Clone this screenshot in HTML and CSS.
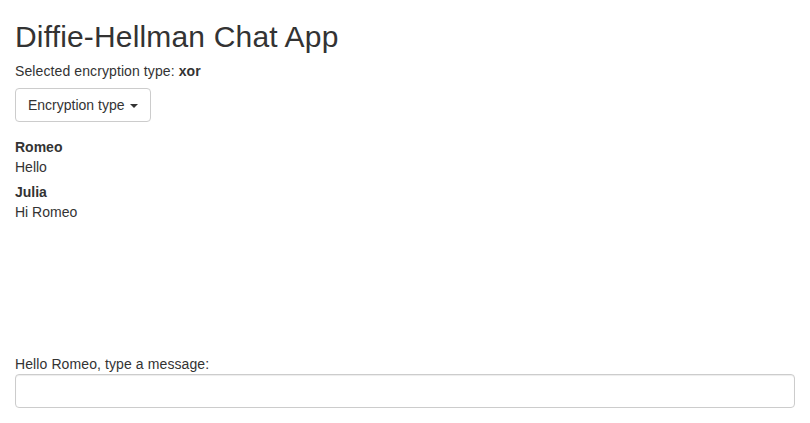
FILE: index.html
```html
<!DOCTYPE html>
<html>
<head>
<meta charset="utf-8">
<link rel="stylesheet" href="styles.css">
</head>
<body>
<div class="container">
  <h2 class="title">Diffie-Hellman Chat App</h2>
  <div class="selected">Selected encryption type: <b>xor</b></div>
  <div class="dropdown">
    <button class="btn" type="button">Encryption type <span class="caret"></span></button>
  </div>
  <div class="messages">
    <div class="message">
      <div class="author">Romeo</div>
      <div class="text">Hello</div>
    </div>
    <div class="message">
      <div class="author">Julia</div>
      <div class="text">Hi Romeo</div>
    </div>
  </div>
  <div class="compose">
    <label class="compose-label">Hello Romeo, type a message:</label>
    <input class="form-control" type="text">
  </div>
</div>
</body>
</html>
```
FILE: styles.css
```css
html, body {
  margin: 0;
  padding: 0;
  background: #fff;
}
body {
  font-family: "Liberation Sans", Arial, sans-serif;
  font-size: 14px;
  line-height: 20px;
  color: #333;
}
.container {
  padding: 0 15px;
  display: flex;
  flex-direction: column;
}
.title {
  font-size: 30px;
  font-weight: 500;
  line-height: 33px;
  letter-spacing: 0.17px;
  margin: 20px 0 8px;
}
.selected {
  margin: 0;
  letter-spacing: 0.1px;
}
.dropdown {
  margin-top: 7px;
  display: flex;
}
.btn {
  font-family: inherit;
  font-size: 14px;
  line-height: 20px;
  color: #333;
  background: #fff;
  border: 1px solid #ccc;
  border-radius: 4px;
  padding: 6px 12px;
  height: 34px;
  cursor: pointer;
}
.caret {
  display: inline-block;
  width: 0;
  height: 0;
  margin-left: 2px;
  vertical-align: middle;
  border-top: 4px solid #333;
  border-left: 4px solid transparent;
  border-right: 4px solid transparent;
}
.messages {
  margin-top: 15px;
  height: 217px;
  display: flex;
  flex-direction: column;
  gap: 5px;
}
.author {
  font-weight: bold;
}
.compose {
  display: flex;
  flex-direction: column;
}
.compose-label {
  font-weight: normal;
  letter-spacing: 0.1px;
  margin-bottom: 0;
}
.form-control {
  height: 34px;
  box-sizing: border-box;
  border: 1px solid #ccc;
  border-radius: 4px;
  box-shadow: inset 0 1px 1px rgba(0,0,0,.075);
  padding: 6px 12px;
  font-family: inherit;
  font-size: 14px;
  width: 100%;
}
```
